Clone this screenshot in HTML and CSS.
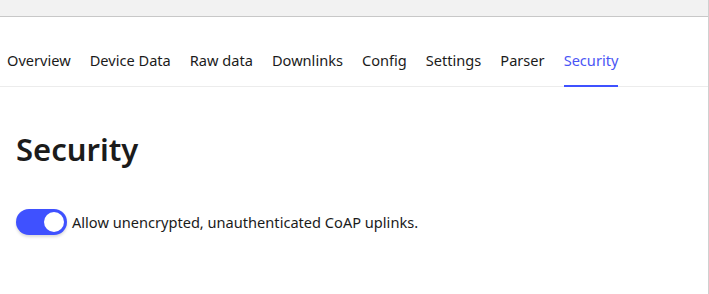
FILE: index.html
```html
<!DOCTYPE html>
<html lang="en">
<head>
    <meta charset="UTF-8">
    <meta name="viewport" content="width=device-width, initial-scale=1.0">
    <title>Security</title>
    <link rel="stylesheet" href="styles.css">
</head>
<body>
    <div class="topbar"></div>

    <nav class="tabs">
        <a class="tab">Overview</a>
        <a class="tab">Device Data</a>
        <a class="tab">Raw data</a>
        <a class="tab">Downlinks</a>
        <a class="tab">Config</a>
        <a class="tab">Settings</a>
        <a class="tab">Parser</a>
        <a class="tab active">Security</a>
    </nav>

    <main class="content">
        <h1>Security</h1>

        <label class="switch-row">
            <span class="switch"><span class="knob"></span></span>
            <span class="switch-label">Allow unencrypted, unauthenticated CoAP uplinks.</span>
        </label>
    </main>
</body>
</html>
```

FILE: styles.css
```css
* {
    margin: 0;
    padding: 0;
    box-sizing: border-box;
}

body {
    background: #ffffff;
    color: #1b1b1b;
    font-family: 'Noto Sans', 'Open Sans', sans-serif;
    font-size: 14.6px;
    border-right: 1px solid #d0d0d0;
    min-height: 100vh;
}

/* Barra superior */
.topbar {
    height: 17px;
    background: #f2f2f2;
    border-bottom: 1px solid #c8c8c8;
}

/* Abas */
.tabs {
    display: flex;
    gap: 19px;
    padding: 0 0 0 7px;
    margin-top: 26px;
    border-bottom: 1px solid #ececec;
}

.tab {
    display: block;
    padding: 5px 0 13px;
    line-height: 24px;
    color: #1b1b1b;
    cursor: pointer;
    border-bottom: 2px solid transparent;
    margin-bottom: -1px;
}

.tab.active {
    color: #4a55f5;
    border-bottom-color: #3f51ff;
}

/* Conteúdo */
.content {
    padding: 0 16px;
}

.content h1 {
    font-size: 31px;
    font-weight: 600;
    line-height: 44px;
    margin-top: 40px;
}

.switch-row {
    display: flex;
    align-items: center;
    gap: 5px;
    margin-top: 38px;
}

.switch {
    display: flex;
    justify-content: flex-end;
    align-items: center;
    width: 51px;
    height: 26px;
    padding: 0 3px;
    background: #3f51ff;
    border-radius: 13px;
    box-shadow: 0 2px 3px rgba(0, 0, 0, 0.15);
}

.knob {
    width: 20px;
    height: 20px;
    background: #ffffff;
    border-radius: 50%;
}

.switch-label {
    line-height: 24px;
}
```
